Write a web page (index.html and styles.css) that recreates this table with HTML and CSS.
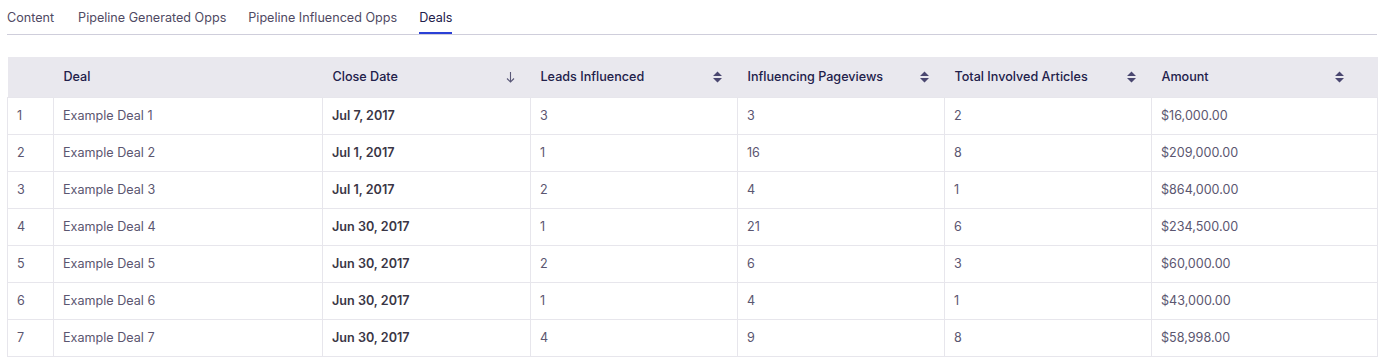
FILE: index.html
```html
<!DOCTYPE html>
<html>
<head>
<meta charset="utf-8">
<link rel="stylesheet" href="styles.css">
</head>
<body>
<nav class="tabs">
  <a class="tab">Content</a>
  <a class="tab">Pipeline Generated Opps</a>
  <a class="tab">Pipeline Influenced Opps</a>
  <a class="tab active">Deals</a>
</nav>
<table class="deals">
  <colgroup>
    <col class="c-idx"><col class="c-deal"><col class="c-date"><col class="c-num"><col class="c-num"><col class="c-num"><col class="c-amt">
  </colgroup>
  <thead>
    <tr>
      <th></th>
      <th><div class="th">Deal</div></th>
      <th><div class="th">Close Date <svg class="ico" width="9" height="12" viewBox="0 0 9 12"><path d="M4.5 1v10M1 7.5l3.5 3.5 3.5-3.5" fill="none" stroke="#5a5878" stroke-width="1.1"/></svg></div></th>
      <th><div class="th">Leads Influenced <svg class="ico" width="9" height="12" viewBox="0 0 9 12"><path d="M4.5 0.5L9 5H0z M0 7h9L4.5 11.5z" fill="#4a4770"/></svg></div></th>
      <th><div class="th">Influencing Pageviews <svg class="ico" width="9" height="12" viewBox="0 0 9 12"><path d="M4.5 0.5L9 5H0z M0 7h9L4.5 11.5z" fill="#4a4770"/></svg></div></th>
      <th><div class="th">Total Involved Articles <svg class="ico" width="9" height="12" viewBox="0 0 9 12"><path d="M4.5 0.5L9 5H0z M0 7h9L4.5 11.5z" fill="#4a4770"/></svg></div></th>
      <th class="last"><div class="th">Amount <svg class="ico" width="9" height="12" viewBox="0 0 9 12"><path d="M4.5 0.5L9 5H0z M0 7h9L4.5 11.5z" fill="#4a4770"/></svg></div></th>
    </tr>
  </thead>
  <tbody>
    <tr><td>1</td><td>Example Deal 1</td><td class="b">Jul 7, 2017</td><td>3</td><td>3</td><td>2</td><td>$16,000.00</td></tr>
    <tr><td>2</td><td>Example Deal 2</td><td class="b">Jul 1, 2017</td><td>1</td><td>16</td><td>8</td><td>$209,000.00</td></tr>
    <tr><td>3</td><td>Example Deal 3</td><td class="b">Jul 1, 2017</td><td>2</td><td>4</td><td>1</td><td>$864,000.00</td></tr>
    <tr><td>4</td><td>Example Deal 4</td><td class="b">Jun 30, 2017</td><td>1</td><td>21</td><td>6</td><td>$234,500.00</td></tr>
    <tr><td>5</td><td>Example Deal 5</td><td class="b">Jun 30, 2017</td><td>2</td><td>6</td><td>3</td><td>$60,000.00</td></tr>
    <tr><td>6</td><td>Example Deal 6</td><td class="b">Jun 30, 2017</td><td>1</td><td>4</td><td>1</td><td>$43,000.00</td></tr>
    <tr><td>7</td><td>Example Deal 7</td><td class="b">Jun 30, 2017</td><td>4</td><td>9</td><td>8</td><td>$58,998.00</td></tr>
  </tbody>
</table>
</body>
</html>
```
FILE: styles.css
```css
html, body {
  margin: 0;
  background: #ffffff;
}
body {
  padding: 0 4px 0 7px;
  font-family: Inter, "Noto Sans", sans-serif;
  font-size: 12.6px;
  color: #5b5670;
}
.tabs {
  display: flex;
  gap: 22px;
  border-bottom: 1px solid #cfcedb;
  box-sizing: border-box;
  width: 1370px;
  height: 35px;
}
.tab {
  display: block;
  padding-top: 10px;
  height: 34px;
  box-sizing: border-box;
  color: #4f4a63;
  line-height: 16px;
}
.tab:first-child { margin-right: 2px; }
.tab.active {
  color: #22204a;
  border-bottom: 2px solid #2b40d6;
}
.deals {
  margin-top: 22px;
  width: 1370px;
  table-layout: fixed;
  border-collapse: collapse;
}
.c-idx { width: 46px; }
.c-deal { width: 269px; }
.c-date { width: 208px; }
.c-num { width: 207px; }
.c-amt { width: 226px; }
thead tr {
  background: #e9e8ee;
}
th {
  height: 39px;
  padding: 0 16px 1px 10px;
  text-align: left;
  font-weight: 500;
  color: #22204a;
}
th.last { padding-right: 34px; }
.th {
  display: flex;
  align-items: center;
  justify-content: space-between;
}
.ico { flex: none; }
td {
  height: 35px;
  padding: 0 9px 1px 9px;
  border: 1px solid #e7e6ec;
  line-height: 16px;
}
td.b {
  font-weight: 600;
  color: #3a3645;
}
```
